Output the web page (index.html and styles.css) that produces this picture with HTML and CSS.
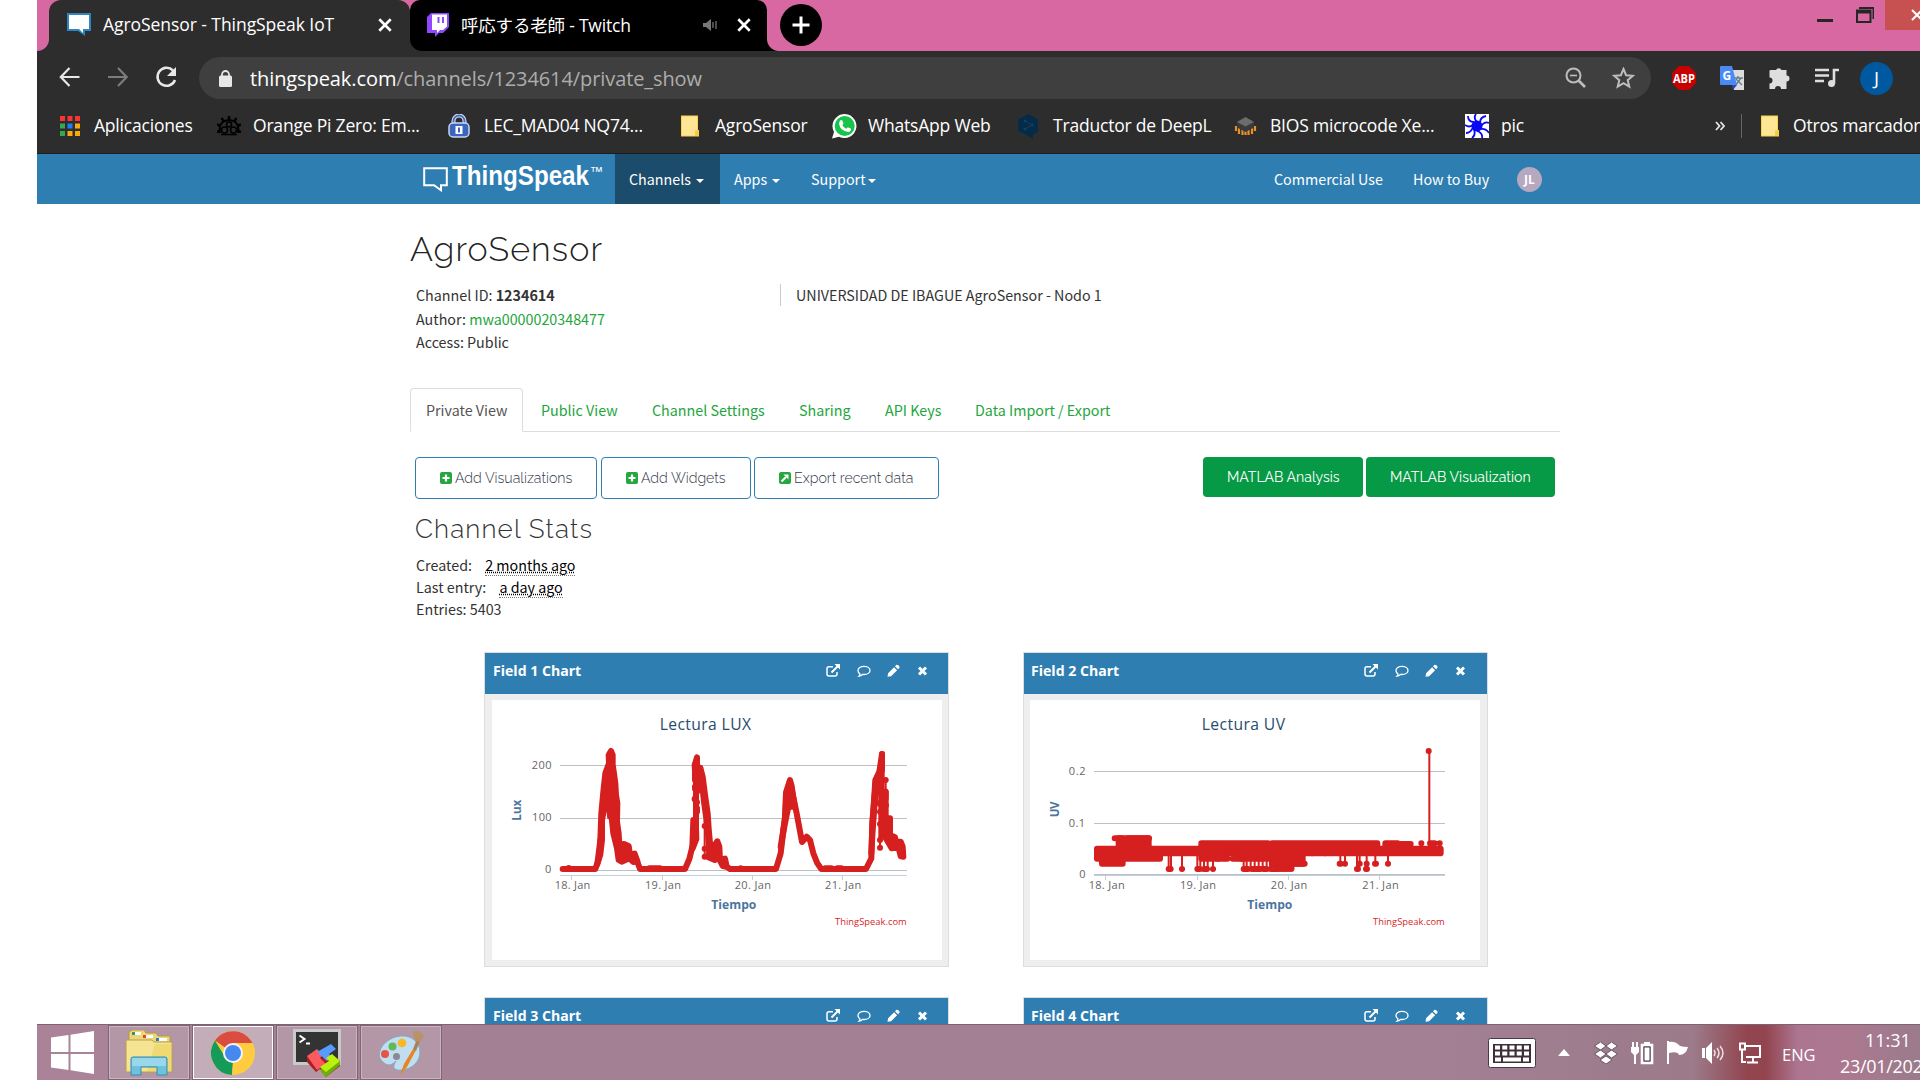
FILE: index.html
```html
<!DOCTYPE html>
<html lang="es">
<head>
<meta charset="utf-8">
<title>AgroSensor - ThingSpeak IoT</title>
<link rel="stylesheet" href="styles.css">
</head>
<body>
<svg class="defs" width="0" height="0" aria-hidden="true">
  <symbol id="i-x" viewBox="0 0 14 14"><path d="M2 2l10 10M12 2L2 12" stroke="#fff" stroke-width="2.3" fill="none"/></symbol>
  <symbol id="i-folder" viewBox="0 0 18 21"><path d="M0 0h17v14.500h1V21H0z" fill="#f8d24a"/><path d="M1 1h15v14h-2v5H1z" fill="#ffe694"/><path d="M14.500 20v-5H17v5z" fill="#f3c945"/></symbol>
  <symbol id="i-card-actions" viewBox="0 0 102 14">
    <g fill="none" stroke="#fff" stroke-width="1.500">
      <path d="M7 2.800H3Q1 2.800 1 4.800V10q0 2 2 2h6q2 0 2-2V8"/><path d="M5.500 8.500L12 2" stroke-width="2"/>
      <path d="M38 2.300c3.400 0 6 1.800 6 4.100s-2.600 4.100-6 4.100q-.8 0-1.500-.1Q35 12 33 12.200q1-1 .9-2.500Q32 8.500 32 6.400c0-2.300 2.600-4.100 6-4.100z" stroke-width="1.300"/>
      <path d="M93 3.500l7 7M100 3.500l-7 7" stroke-width="3"/>
    </g>
    <path d="M8.500 0H14v5.500z M61.500 12.800l.6-3.600 6-6 3 3-6 6zM69 2.300l1.500-1.500 1.500.2 1.500 1.500v1.300L72 5.300z" fill="#fff"/>
  </symbol>
</svg>
<div class="desktop">
  <header class="titlebar">
    <div class="tab tab-active">
      <svg class="tab-icon" width="24" height="24" viewBox="0 0 24 24"><path d="M0 0h24v18h-6v5l-7-5H0z" fill="#2e86c1"/><path d="M2 2h20v14h-6v4l-4-4H2z" fill="#fff"/></svg>
      <span class="tab-title t1">AgroSensor - ThingSpeak IoT</span>
      <svg class="tab-close" width="16" height="16"><use href="#i-x"/></svg>
    </div>
    <div class="tab tab-twitch">
      <svg class="tab-icon" width="22" height="24" viewBox="0 0 22 24"><path d="M4 0h18v14l-6 6h-4l-4 4v-4H0V4z" fill="#9147ff"/><path d="M5 1.500h15v12l-4 3.500h-3l-3 3v-3H5z" fill="#fff"/><path d="M11.500 4v6M16 4v6" stroke="#9147ff" stroke-width="2"/></svg>
      <span class="tab-title t2">呼応する老師 - Twitch</span>
      <svg class="speaker" width="16" height="14" viewBox="0 0 16 14"><path d="M0 5h3l5-4v12L3 9H0z" fill="#777"/><path d="M10 4v6M13 3v8" stroke="#666" stroke-width="1.500"/></svg>
      <svg class="tab-close" width="16" height="16"><use href="#i-x"/></svg>
    </div>
    <div class="newtab"><svg width="42" height="42" viewBox="0 0 42 42"><circle cx="21" cy="21" r="21"/><path d="M21 12.500v17M12.500 21h17" stroke="#fff" stroke-width="3"/></svg></div>
    <div class="wincontrols">
      <svg width="60" height="30" viewBox="0 0 60 30"><path d="M0 19h16v3H0z" fill="#262626"/><path d="M42 7h15v12h-1.500V9H42z" fill="#262626"/><path d="M40 10.500h13.500v11.500H40z" fill="none" stroke="#262626" stroke-width="2"/><path d="M39 10h15v3.500H39z" fill="#262626"/></svg>
      <div class="winclose"><svg width="12" height="12" viewBox="0 0 12 12"><path d="M1 1l10 10M11 1L1 11" stroke="#fff" stroke-width="2"/></svg></div>
    </div>
  </header>

  <div class="toolbar">
    <svg class="nav" width="126" height="24" viewBox="0 0 126 24" fill="none" stroke-width="2.200"><path d="M20.500 12H2M10.500 3L1.800 12l8.700 9" stroke="#e8e8e8"/><path d="M49 12h18.500M59 3l8.700 9-8.700 9" stroke="#7c7c7c"/><path d="M114 5.500A9 9 0 1 0 116 15" stroke="#e8e8e8" stroke-width="2.500"/><path d="M117 2v9h-9z" fill="#e8e8e8"/></svg>
    <div class="omnibox">
      <svg width="13" height="17" viewBox="0 0 13 17"><rect y="5.500" width="13" height="11.500" rx="1.500" fill="#e8e8e8"/><path d="M3 7V4.500a3.500 3.500 0 0 1 7 0V7" fill="none" stroke="#e8e8e8" stroke-width="1.800"/></svg>
      <span class="url"><b>thingspeak.com</b>/channels/1234614/private_show</span>
      <svg class="omni-icons" width="70" height="22" viewBox="0 0 70 22" fill="none" stroke="#bdbdbd" stroke-width="2"><circle cx="8.500" cy="8.500" r="7"/><path d="M13.500 13.500l6.500 6.500" stroke-width="2.600"/><path d="M5 8.500h7" stroke-width="1.600"/><path d="M58.500 2l2.600 6.200 6.700.6-5.100 4.400 1.600 6.500-5.800-3.500-5.800 3.500 1.600-6.500-5.100-4.400 6.700-.6z"/></svg>
    </div>
    <div class="extensions">
      <svg width="24" height="24" viewBox="0 0 24 24"><path d="M7 0h10l7 7v10l-7 7H7l-7-7V7z" fill="#c70000"/><text x="1" y="16.500" textLength="22" lengthAdjust="spacingAndGlyphs" class="abp">ABP</text></svg>
      <svg width="24" height="24" viewBox="0 0 24 24"><path d="M10 4h14v20H14z" fill="#dcdcdc"/><path d="M14 12h9M18 10v2M15 20l6-8M16 13l6 6" stroke="#607d8b" stroke-width="1.300"/><path d="M12 19h5l-4 5z" fill="#3049b8"/><path d="M1 0h11l5 19H1q-1 0-1-1V1q0-1 1-1z" fill="#4a8af4"/><text x="2.500" y="14" class="gtr">G</text></svg>
      <svg width="23" height="22" viewBox="0 0 22 22"><path d="M2 3h5.500a3 3 0 0 1 5.500 0H18v5.500a3 3 0 0 1 0 6V22h-5.500a3 3 0 0 0-6 0H1v-5.500a3 3 0 0 0 0-6V4q0-1 1-1z" fill="#dedede"/></svg>
      <svg width="24" height="20" viewBox="0 0 24 20"><path d="M0 2h14M0 7.500h14M0 13h9" stroke="#dedede" stroke-width="2.400"/><path d="M19 16V2h5" stroke="#dedede" stroke-width="2.600" fill="none"/><circle cx="16.500" cy="15.500" r="3.500" fill="#dedede"/></svg>
      <div class="profile">J</div>
    </div>
  </div>

  <nav class="bookmarks">
    <div class="bm"><svg width="20" height="20" viewBox="0 0 20 20"><path d="M0 0h5v5H0zM7.500 0h5v5h-5zM15 0h5v5h-5z" fill="#f33"/><path d="M0 7.500h5v5H0zM0 15h5v5H0z" fill="#34a853"/><path d="M7.500 7.500h5v5h-5z" fill="#1a80ff"/><path d="M15 7.500h5v5h-5zM7.500 15h5v5h-5zM15 15h5v5h-5z" fill="#fba90a"/></svg><span class="b1">Aplicaciones</span></div>
    <div class="bm"><svg width="24" height="20" viewBox="0 0 24 20" fill="none" stroke="#000"><path d="M3 17Q1 5 12 4q11 1 9 13" stroke-width="2"/><path d="M12 4V0M7 5.500L4.500 2M17 5.500L19.500 2M3.500 10L0 8.500M20.500 10L24 8.500M2.500 15L0 16M21.500 15l2.500 1" stroke-width="2.500"/><circle cx="7.500" cy="14" r="3" stroke-width="1.600"/><circle cx="16.500" cy="14" r="3" stroke-width="1.600"/><circle cx="12" cy="8.500" r="2.500" stroke-width="1.600"/><path d="M4 18.500h16" stroke-width="1.600"/></svg><span class="b2">Orange Pi Zero: Em...</span></div>
    <div class="bm"><svg width="22" height="24" viewBox="0 0 22 24"><path d="M5.500 11V7a5.500 5.500 0 0 1 11 0v4" fill="none" stroke="#d3def5" stroke-width="4"/><path d="M5.500 11V7a5.500 5.500 0 0 1 11 0v4" fill="none" stroke="#476cb8" stroke-width="1.800"/><rect x="1" y="9" width="20" height="14" rx="4" fill="#3c66bd" stroke="#c6d5f2" stroke-width="1.500"/><path d="M7.500 12h7v8h-7z" fill="#fff"/><path d="M11 13.500v5" stroke="#3c66bd" stroke-width="2"/></svg><span class="b3">LEC_MAD04 NQ74...</span></div>
    <div class="bm"><svg width="18" height="22"><use href="#i-folder"/></svg><span class="b4">AgroSensor</span></div>
    <div class="bm"><svg width="25" height="25" viewBox="0 0 25 25"><path d="M0 24.500l2-6.500A12 12 0 1 1 7 22.800z" fill="#fff"/><circle cx="12.700" cy="12" r="10" fill="#17c34b"/><path d="M8 6.500l2-.5 1.500 3.500-1.200 1.500q1.300 2.700 4 3.800l1.500-1.600 3.300 1.600q0 3-3 3.200Q8 17 7 9.500z" fill="#fff"/></svg><span class="b5">WhatsApp Web</span></div>
    <div class="bm"><svg width="21" height="25" viewBox="0 0 21 25"><path d="M10.500 0L20 5.500v12L15 20.500V25l-6-4-9-4V5.500z" fill="#042b48"/><path d="M7 7l7 4-7 4" stroke="#143f5e" fill="none"/><circle cx="7" cy="7" r="1.500" fill="#143f5e"/><circle cx="14" cy="11" r="1.500" fill="#143f5e"/><circle cx="7" cy="15" r="1.500" fill="#143f5e"/></svg><span class="b6">Traductor de DeepL</span></div>
    <div class="bm"><svg width="23" height="20" viewBox="0 0 23 20"><path d="M2 10v5M5 12v6M8.500 14v5M11.500 15v4M14.500 14v5M18 12v6M21 10v5" stroke="#e8902c" stroke-width="2.200"/><path d="M11.500 1L20 6v5.500L11.500 16 3 11.500V6z" fill="#3a3a3a"/><path d="M11.500 1L20 6l-8.500 4.500L3 6z" fill="#6c6c6c"/></svg><span class="b7">BIOS microcode Xe...</span></div>
    <div class="bm"><svg width="24" height="24" viewBox="0 0 24 24"><path d="M0 0h24v24H0z" fill="#fff"/><circle cx="12" cy="12" r="5.500" fill="#0808f5"/><path d="M12 8q-4-4-1-8M15 9q0-6 6-7M16 12q4-5 8-3M15 15q6-1 9 4M12 17q6 2 5 7M9 16q2 5-2 8M8 13q-2 6-7 6M8 11q-4 3-8 0M9 8Q3 8 3 2" fill="none" stroke="#0808f5" stroke-width="1.800"/></svg><span class="b8">pic</span></div>
    <div class="bm-more"><svg width="10" height="10" viewBox="0 0 10 10"><path d="M1 1l3.500 4L1 9M5.500 1L9 5 5.500 9" fill="none" stroke="#e5e5e5" stroke-width="1.800"/></svg></div>
    <div class="bm bm-last"><svg width="18" height="22"><use href="#i-folder"/></svg><span class="b9">Otros marcadores</span></div>
  </nav>

  <main class="page">
    <div class="site-nav">
      <div class="brand"><svg width="25" height="25" viewBox="0 0 25 25"><path d="M1.200 1.200h22.600v17H18v5l-7-5H1.200z" fill="none" stroke="#fff" stroke-width="2"/></svg><svg class="brand-name" width="154" height="32" viewBox="0 0 154 32"><text x="0" y="23" textLength="137" lengthAdjust="spacingAndGlyphs" class="word">ThingSpeak</text><text x="138" y="14" textLength="13" lengthAdjust="spacingAndGlyphs" class="tm">™</text></svg></div>
      <div class="menu on"><span>Channels</span><i class="caret"></i></div>
      <div class="menu apps"><span>Apps</span><i class="caret"></i></div>
      <div class="menu support"><span>Support</span><i class="caret"></i></div>
      <span class="right-link commercial">Commercial Use</span>
      <span class="right-link buy">How to Buy</span>
      <span class="avatar">JL</span>
    </div>
    <div class="container">
      <h1>AgroSensor</h1>
      <div class="meta">
        <div class="meta-left"><p>Channel ID: <b>1234614</b></p><p>Author: <a>mwa0000020348477</a></p><p>Access: Public</p></div>
        <div class="meta-right">UNIVERSIDAD DE IBAGUE AgroSensor - Nodo 1</div>
      </div>
      <div class="tabs">
        <span class="active">Private View</span><span>Public View</span><span>Channel Settings</span><span>Sharing</span><span>API Keys</span><span>Data Import / Export</span>
      </div>
      <div class="actions">
        <div class="btn v"><svg width="12" height="12" viewBox="0 0 12 12"><rect width="12" height="12" rx="2" fill="#26a63f"/><path d="M6 2.500v7M2.500 6h7" stroke="#fff" stroke-width="2.200"/></svg><span>Add Visualizations</span></div>
        <div class="btn w"><svg width="12" height="12" viewBox="0 0 12 12"><rect width="12" height="12" rx="2" fill="#26a63f"/><path d="M6 2.500v7M2.500 6h7" stroke="#fff" stroke-width="2.200"/></svg><span>Add Widgets</span></div>
        <div class="btn e"><svg width="12" height="12" viewBox="0 0 12 12"><rect width="12" height="12" rx="2" fill="#26a63f"/><path d="M2.500 9.500L7 5" stroke="#fff" stroke-width="2.200"/><path d="M4.500 2.500h5v5z" fill="#fff"/></svg><span>Export recent data</span></div>
        <div class="green g1"><span>MATLAB Analysis</span></div>
        <div class="green g2"><span>MATLAB Visualization</span></div>
      </div>
      <h2>Channel Stats</h2>
      <div class="stats"><p>Created: <abbr class="created">2 months ago</abbr></p><p>Last entry: <abbr class="last">a day ago</abbr></p><p>Entries: 5403</p></div>
      <div class="cards">
        <section class="card">
          <div class="card-head"><span>Field 1 Chart</span><svg width="102" height="14"><use href="#i-card-actions"/></svg></div>
          <svg class="chart" viewBox="36 180 1350 780">
            <path class="grid" d="M240 376.500H1281M240 535.500H1281M240 691.500H1281"/>
            <path class="axis" d="M240 706.500H1281M274.500 706v14M547.500 706v14M817.500 706v14M1087.500 706v14"/>
            <text class="title" x="539" y="270" textLength="274">Lectura LUX</text>
            <g class="labels"><text x="155" y="387" textLength="60">200</text><text x="156" y="543" textLength="59">100</text><text x="195" y="699">0</text><text x="224" y="747" textLength="107">18. Jan</text><text x="495" y="747" textLength="108">19. Jan</text><text x="764" y="747" textLength="109">20. Jan</text><text x="1035" y="747" textLength="109">21. Jan</text></g>
            <text class="axis-title" x="694" y="808" textLength="135" lengthAdjust="spacingAndGlyphs">Tiempo</text>
            <text class="axis-title" transform="translate(124 542) rotate(-90)" textLength="63" lengthAdjust="spacingAndGlyphs">Lux</text>
            <text class="credit" x="1065" y="855" textLength="215">ThingSpeak.com</text>
            <g class="line">
              <path d="M248 687H346L354 664L360 635L361 600M470 660L480 687H615L628 657L637 620M740 680L750 687H888L902 640L908 590L915 530L918 460L930 425L938 462L950 520L966 606L980 590L990 600L1000 640L1012 670L1024 687H1158L1174 655L1177 545L1188 420L1198 396L1206 342M266 684h.1M508 685H540M782 685h.1M1036 685H1054M1072 685h12"/>
              <path class="solid" d="M352 672L361 600L364 520L370 455L376 400L387 370L386 345L393 333L398 345V374L402 400L406 430L408 465L412 490L411 545L416 580L418 615L432 612L446 618L450 645L464 641L472 664L460 666L448 655L425 665L416 660L411 625L400 580L395 532L390 530L388 480L374 500L366 540L366 600L361 643Z"/>
              <path class="solid" d="M637 620L640 540L648 562L649 597L638 625ZM644 375L651 352L651 450L646 410ZM661 383L668 410L675 465L683 520L686 565L690 610L688 630L682 558L672 485ZM690 620L696 627L712 604L718 620L720 660L735 656L740 680L728 678L715 652L704 660L685 652Z"/>
              <path class="solid" d="M902 620L916 530L919 455L930 420L935 438L938 460L944 500L935 500L928 485L916 545ZM1174 640L1178 545L1186 420L1198 396L1195 410L1184 490L1178 570ZM1208 545L1212 470L1217 455L1217 535L1230 535L1230 585L1245 592L1248 605L1262 605L1268 620L1270 650L1262 649L1255 620L1235 625L1222 602L1208 580Z"/>
              <path d="M645 375V420M651 360V455M1206 342V390"/>
              <path class="core" d="M645 420V560M651 455V597M1201 400V600M1208 390V560"/>
              <path class="stems" d="M365 500V600M674 540V650M1200 590V625M1217 420V460"/>
              <path d="M645 440v6M651 487h.1M644 476v2M651 505v10M674 558h.1M674 626h.1M674 650h.1M366 564h.1M1199 489v2M1200 515h.1M1200 552h.1M1200 600h.1M1200 623h.1M1206 365v24M1217 420h.1M1217 455v20M1218 496h.1"/>
            </g>
          </svg>
        </section>
        <section class="card card2">
          <div class="card-head"><span>Field 2 Chart</span><svg width="102" height="14"><use href="#i-card-actions"/></svg></div>
          <svg class="chart" viewBox="42 180 1350 780">
            <path class="grid" d="M234 394.500H1287M234 550.500H1287M234 703.500H1287"/>
            <path class="axis" d="M234 706.500H1287M268 707v12M544 707v12M817 707v12M1090 707v12"/>
            <text class="title" x="557" y="270" textLength="250">Lectura UV</text>
            <g class="labels"><text x="158" y="404" textLength="51">0.2</text><text x="158" y="560" textLength="49">0.1</text><text x="190" y="714">0</text><text x="218" y="747" textLength="108">18. Jan</text><text x="492" y="747" textLength="108">19. Jan</text><text x="764" y="747" textLength="110">20. Jan</text><text x="1039" y="747" textLength="109">21. Jan</text></g>
            <text class="axis-title" x="694" y="808" textLength="135" lengthAdjust="spacingAndGlyphs">Tiempo</text>
            <text class="axis-title" transform="translate(129 532) rotate(-90)" textLength="48">UV</text>
            <text class="credit" x="1071" y="855" textLength="215">ThingSpeak.com</text>
            <g class="line">
              <path class="solid" d="M243 626H1274V640H243ZM243 626H432V656H243ZM258 656H320V671H258ZM336 595H398V640H336ZM308 595H318V640H308ZM556 610H756V626H556ZM556 626H606V656H556ZM676 610H730V656H676ZM768 610H1084V626H768ZM770 630H826V686H770ZM820 630H860V671H820ZM1108 610H1145V626H1108ZM962 626H1084V640H962Z"/>
              <path d="M296 595H399M606 656H634M650 656H680M730 656H760M835 671H866M1146 612H1184M826 686H770"/>
              <path class="stems" d="M458 640V686M465 640V686M498 640V686M544 640V686M553 640V686M564 640V686M575 640V686M591 640V686M623 615V656M638 615V656M650 615V656M664 615V656M683 656V686M692 656V686M704 656V686M716 656V686M728 656V686M740 656V686M752 656V686M762 640V686M888 626V640M927 626V640M973 640V671M987 640V671M1023 640V686M1031 640V671M1052 640V686M1078 640V671M1116 640V671M1216 610V626M1240 333V626"/>
              <path d="M458 687h6M498 687h.1M544 687h7M564 687h9M591 687h.1M683 687h13M708 687h25M742 687h10M765 687h15M888 640h.1M927 640h.1M971 671h3M987 671h.1M1023 687h3M1031 671h.1M1050 687h3M1052 671h.1M1077 671h3M1116 671h.1M1216 610h.1M1242 610h14M1271 610h.1M1238 333h.1"/>
            </g>
          </svg>
        </section>
        <section class="card"><div class="card-head"><span>Field 3 Chart</span><svg width="102" height="14"><use href="#i-card-actions"/></svg></div></section>
        <section class="card card2"><div class="card-head"><span>Field 4 Chart</span><svg width="102" height="14"><use href="#i-card-actions"/></svg></div></section>
      </div>
    </div>
  </main>

  <footer class="taskbar">
    <div class="start"><svg width="43" height="43" viewBox="0 0 43 43" fill="#fff"><path d="M0 6.500L17.500 4v17H0zM19.500 3.700L43 0v21H19.500zM0 23h17.500v16L0 36.500zM19.500 23H43v20l-23.500-3.700z"/></svg></div>
    <div class="task"><svg width="48" height="46" viewBox="0 0 48 46"><path d="M4 2l3-2h12l2 3h10l2 3h12v12H4z" fill="#ecd67c" stroke="#b99a3c"/><path d="M7 2h9v3H7zM18 5h10v3H18zM31 8h11v3H31z" fill="#fff"/><path d="M7 2h3v3H7z" fill="#29a04b"/><path d="M18 5h3v3h-3z" fill="#e8442c"/><path d="M31 8h3v3h-3z" fill="#2a7fc6"/><path d="M1 11q0-1 1-1h25l2 2h17q1 0 1 1v29H1z" fill="#f5e493" stroke="#bd9e43"/><path d="M30 14h16v27H22z" fill="#e9cb4b" opacity=".45"/><path d="M6 45V29q0-2 2-2h32q2 0 2 2v16H32v-8H16v8z" fill="#6ec1df" stroke="#348caf"/><path d="M7 28h34v8H7z" fill="#b5e7f3" opacity=".6"/></svg></div>
    <div class="task current"><svg width="44" height="44" viewBox="0 0 44 44"><circle cx="22" cy="22" r="22" fill="#ffcb3f"/><path d="M22 22L4 9.500A22 22 0 0 1 41.500 12H22z" fill="#da4b40"/><path d="M4 9.500L14 26l8 6-1 12A22 22 0 0 1 4 9.500z" fill="#159b58"/><path d="M21 44l10-17-9 4z" fill="#ffcb3f"/><circle cx="22" cy="22" r="10" fill="#f5f5f5"/><circle cx="22" cy="22" r="8" fill="#4688f1"/></svg></div>
    <div class="task"><svg width="48" height="48" viewBox="0 0 48 48"><path d="M0 0h48v36H0z" fill="#c9c9c9"/><path d="M3 3h42v30H3z" fill="#333"/><path d="M6.500 6.500l5 3.500-5 3.500M13 14.500h4" stroke="#fff" stroke-width="2" fill="none"/><path d="M14 27v6l9 10 4-3 6 8 14-11v-6z" fill="#a91f24"/><path d="M28 37v6l5 5 14-12v-5z" fill="#6eae0a"/><path d="M14 27l10-7 6 6-3 3 6 6-9 6z" fill="#fb5b5f"/><path d="M24 23l14-8 5 5-7 5 3 3-5 4z" fill="#569bff"/><path d="M27 38l9-6-3-3 6-4 8 7-14 11z" fill="#b9f20c"/></svg></div>
    <div class="task"><svg width="48" height="46" viewBox="0 0 48 46"><path d="M24 6C34 5 43 12 43 22c0 9-7 17-18 18-9 1-10-3-6-9-4 4-8 6-13 1C-4 24 8 7 24 6z" fill="#c0deef" stroke="#80aac4"/><circle cx="19.500" cy="26.500" r="3.500" fill="#8e8794"/><circle cx="8" cy="24" r="4" fill="#e65445"/><circle cx="15.500" cy="16.500" r="4" fill="#62b85a"/><circle cx="25" cy="13" r="4.300" fill="#f9b625"/><path d="M36 19l3 1-9 17-7 8 4-11z" fill="#e78525"/><path d="M36 19l4-10 3 2-4 10z" fill="#a7825c"/><path d="M36 2q5-3 11 4l-4 6-5-1z" fill="#b99266"/></svg></div>
    <div class="tray">
      <svg class="kbd" width="48" height="30" viewBox="0 0 48 30"><rect x=".5" y=".5" width="47" height="29" rx="2" fill="#fff" stroke="#4b3a45"/><path d="M5 6h38v19H5z" fill="#3f3038"/><path d="M7 9.500h34M7 15.500h34" stroke="#fff" stroke-width="4" stroke-dasharray="5 2.250"/><path d="M7 21.500h6M15 21.500h18M35 21.500h6" stroke="#fff" stroke-width="4"/></svg>
      <svg class="up" width="12" height="7" viewBox="0 0 12 7"><path d="M6 0l6 7H0z" fill="#fff"/></svg>
      <svg class="drop" width="24" height="22" viewBox="0 0 24 22" fill="#fff" stroke="#55424e" stroke-width=".8"><path d="M6.500 0l5.500 4-5.500 4L.5 4zM17.500 0L12 4l5.500 4 6-4zM.5 12l6-4 5.500 4-5.500 4zM23.500 12l-6-4-5.500 4 5.500 4zM12 14l6 4-6 4-6-4z"/></svg>
      <svg class="power" width="24" height="24" viewBox="0 0 24 24"><path d="M1 6h8v5l-3 3v9H4v-9l-3-3zM2 1h2v5H2zM6 1h2v5H6z" fill="#fff"/><path d="M12 4h10v18H12z" fill="none" stroke="#fff" stroke-width="2.600"/><path d="M14 6h6v14h-6z" fill="#fff" stroke="#4b3a45"/><path d="M14 1h6v2h-6z" fill="#fff"/></svg>
      <svg class="flag" width="23" height="24" viewBox="0 0 23 24"><path d="M2 0v23" stroke="#fff" stroke-width="2"/><path d="M3 1q5-1 9 2 1 3 10 3-2 8-9 8-1-4-10-2z" fill="#fff"/></svg>
      <svg class="sound" width="24" height="24" viewBox="0 0 24 24"><path d="M1 7h3v10H1zM5 7l6-6v22l-6-6z" fill="#fff"/><path d="M13 9q2 3 0 6M16 7q4 5 0 10M19 5q6 7 0 14" fill="none" stroke="#ecdfe5" stroke-width="1.500"/></svg>
      <svg class="net" width="24" height="22" viewBox="0 0 24 22" fill="none" stroke="#fff" stroke-width="2"><path d="M8 4h14v11H8M15 15v5M9 20.500h11M4 8v12h4"/><path d="M2 1.500h5v6H2z"/></svg>
      <span class="lang">ENG</span>
      <div class="clock"><span class="time">11:31</span><span class="date">23/01/2021</span></div>
    </div>
  </footer>
</div>
</body>
</html>
```
FILE: styles.css
```css
* { box-sizing: border-box; }
body { margin: 0; background: #fff; overflow: hidden; font-family: "Open Sans", "Noto Sans", "Noto Sans CJK JP", sans-serif; }
p, h1, h2 { margin: 0; font-weight: 400; }
svg { display: block; flex: none; }
span { white-space: nowrap; }
.defs { position: absolute; }
.desktop { width: 1883px; height: 1080px; margin-left: 37px; display: flex; flex-direction: column; overflow: hidden; }

/* browser chrome */
.titlebar { height: 51px; flex: none; display: flex; padding-left: 12px; background: radial-gradient(circle at 0 0, #d768a2 11.5px, #2d2d2d 12.500px) 0 39px / 12px 12px no-repeat, radial-gradient(circle at 100% 0, #d768a2 11.500px, #000 12.500px) 730px 39px / 12px 12px no-repeat, #d768a2; }
.tab { height: 51px; display: flex; align-items: center; color: #fff; font-size: 17.5px; padding-bottom: 2px; }
.tab-active { width: 361px; background: #2d2d2d; border-radius: 12px 12px 0 0; padding-left: 18px; }
.tab-twitch { width: 357px; background: radial-gradient(circle at 100% 0, #000 11.500px, #2d2d2d 12.500px) 0 39px / 12px 12px no-repeat, #000; border-radius: 10px 10px 0 0; padding-left: 17px; }
.t1 { margin: -1px 0 0 12px; width: 274px; letter-spacing: -.06px; }
.t2 { margin: -1px 0 0 12px; width: 242px; letter-spacing: -.2px; }
.speaker { margin-right: 17px; }
.newtab { margin: 4px 0 0 13px; }
.wincontrols { margin-left: auto; display: flex; }
.wincontrols > svg { margin-right: 8px; }
.winclose { width: 35px; height: 30px; background: #c75050; padding: 9px 0 0 26px; overflow: hidden; }
.toolbar { height: 52px; flex: none; background: #2d2d2d; display: flex; padding-top: 6px; }
.nav { margin: 8px 14px 0 22px; }
.omnibox { width: 1452px; height: 42px; border-radius: 21px; background: #3f3f3f; display: flex; align-items: center; padding: 0 16px 0 20px; }
.url { margin-left: 18px; margin-top: 0; font-size: 20px; color: #adadad; letter-spacing: -.09px; }
.url b { font-weight: 400; color: #fff; }
.omni-icons { margin-left: auto; }
.extensions { display: flex; align-items: center; height: 42px; margin-left: 21px; gap: 24px; }
.abp { font: bold 12px "Open Sans", sans-serif; fill: #fff; }
.gtr { font: bold 12px "Open Sans", sans-serif; fill: #fff; }
.profile { width: 33px; height: 33px; border-radius: 50%; background: #0058a0; color: #fff; font-size: 19px; line-height: 32px; text-align: center; margin-left: -3px; }
.bookmarks { height: 51px; flex: none; background: #2d2d2d; border-bottom: 1px solid #1c1c1c; display: grid; grid-template-columns: 157px 231px 233px 151px 186px 216px 231px 250px 46px 1fr; align-items: center; padding: 0 0 4px 23px; color: #fff; font-size: 17.500px; }
.bm { display: flex; align-items: center; height: 46px; }
.bm span { margin-top: -2px; letter-spacing: -.2px; }
.b1 { margin-left: 14px; } .b2 { margin-left: 12px; } .b3 { margin-left: 14px; } .b4 { margin-left: 16px; }
.b5 { margin-left: 11px; } .b6 { margin-left: 14px; } .b7 { margin-left: 13px; } .b8 { margin-left: 12px; } .b9 { margin-left: 14px; }
.bm-more { border-right: 1px solid #666; height: 24px; width: 27px; padding-top: 7px; }

/* site navigation */
.page { flex: 1; min-height: 0; overflow: hidden; background: #fff; color: #333; font-family: "Noto Sans CJK JP", sans-serif; font-size: 14.300px; }
.site-nav { height: 50px; background: #2e7eb2; display: flex; align-items: center; padding-left: 386px; color: #fff; }
.brand { width: 192px; display: flex; align-items: center; }
.brand-name { margin: -2px 0 0 4px; overflow: visible; fill: #fff; }
.word { font: bold 27px "Liberation Sans", sans-serif; }
.tm { font: 13px "Liberation Sans", sans-serif; }
.menu { height: 50px; display: flex; align-items: center; }
.menu span, .right-link { margin-top: -2px; }
.menu.on { width: 105px; padding-left: 14px; background: #1c4c6b; }
.apps { width: 91px; padding-left: 14px; }
.support { width: 463px; }
.support .caret { margin-left: 2px; }
.caret { margin: 3px 0 0 5px; border: 4px solid transparent; border-top-color: #fff; border-bottom: 0; }
.commercial { width: 139px; }
.buy { width: 104px; }
.avatar { width: 25px; height: 25px; border-radius: 50%; background: #b5a8bf; font: bold 12px/25px "Open Sans", sans-serif; text-align: center; }

/* channel page */
.container { margin-left: 373px; width: 1150px; }
h1 { font: 300 34px/48px Raleway, Lato, sans-serif; letter-spacing: 1.100px; padding-top: 21px; color: #222; }
.meta { display: flex; margin-top: 11px; padding-left: 6px; line-height: 21.500px; }
.meta p { height: 23.500px; }
.meta-left { width: 364px; }
.meta-left a { color: #22a63c; }
.meta-right { height: 22px; padding-left: 15px; border-left: 1px solid #ccc; }
.tabs { height: 44px; margin-top: 33.500px; border-bottom: 1px solid #ddd; display: grid; grid-template-columns: 131px 111px 147px 86px 90px 1fr; line-height: 44px; color: #22a63c; }
.tabs .active { width: 113px; height: 44px; padding-left: 15px; border: 1px solid #ddd; border-bottom-color: #fff; border-radius: 4px 4px 0 0; line-height: 42px; color: #555; background: #fff; }
.actions { display: flex; height: 42px; margin-top: 25px; padding-left: 5px; font: 300 14.200px/40px Raleway, Lato, sans-serif; }
.btn { height: 42px; border: 1px solid #2e7eb2; border-radius: 4px; display: flex; align-items: center; padding-left: 24px; color: #303849; }
.btn span { margin-left: 3px; }
.v { width: 182px; margin-right: 4px; }
.w { width: 150px; margin-right: 3px; }
.e { width: 185px; margin-right: 264px; }
.green { height: 40px; border-radius: 4px; background: #079a46; color: #fff; padding-left: 24px; font-weight: 400; font-size: 14.050px; }
.g1 { width: 160px; margin-right: 3px; }
.g2 { width: 189px; }
h2 { font: 300 26px/36px Raleway, Lato, sans-serif; letter-spacing: 1.150px; margin: 12px 0 0 5px; }
.stats { margin-top: 6.500px; padding-left: 6px; line-height: 22px; }
.stats p { height: 22px; }
abbr { margin-left: 10px; color: #000; text-decoration: underline dotted; border-bottom: 1px dotted #777; display: inline-block; line-height: 19px; height: 21px; }
.cards { margin-top: 32.500px; padding-left: 74px; display: grid; grid-template-columns: 465px 465px; grid-auto-rows: 315px; gap: 30px 74px; }
.card { border: 1px solid #ddd; background: #eee; }
.card-head { height: 41px; background: #2e7eb2; color: #fff; display: flex; justify-content: space-between; padding: 8px 20px 0 8px; font: bold 14.100px/20px "Open Sans", sans-serif; }
.card2 .card-head { padding: 8px 21px 0 7px; }
.card-head svg { margin-top: 3px; }
.chart { width: 450px; height: 260px; margin: 6px 0 0 7px; background: #fff; }
.card2 .chart { margin-left: 6px; }
.chart text { font-family: "Open Sans", sans-serif; }
.chart .title { font-size: 47px; fill: #274b6d; }
.chart .labels text { font-size: 33px; fill: #666; }
.chart .axis-title { font-size: 35px; font-weight: 700; fill: #4d759e; }
.chart .credit { font-size: 28px; fill: #d61f1f; }
.grid { stroke: #c0c0c0; stroke-width: 3; shape-rendering: crispEdges; }
.axis { stroke: #c0d0e0; stroke-width: 3; fill: none; shape-rendering: crispEdges; }
.line path { fill: none; stroke: #d61f1f; stroke-width: 18; stroke-linecap: round; stroke-linejoin: round; }
.line .solid { fill: #d61f1f; }
.line .stems { stroke-width: 6; }
.line .core { stroke-width: 12; }

/* taskbar */
.taskbar { height: 56px; flex: none; display: flex; border-top: 1px solid #7e6472; background: linear-gradient(90deg, #aa8399 0, #a38094 25%, #a38094 75%, #9c7c8c 84%, #9c7a89 88%, #92454f 90.800%, #92454f 91.800%, #ac7590 93.500%, #ac7890 96%, #9a7b8c 100%); }
.start { width: 71px; flex: none; padding: 6px 0 0 14px; }
.task { width: 82px; flex: none; height: 55px; margin-right: 2px; border: 1px solid #806674; box-shadow: inset 0 0 0 1px #c9b3be; background: #b497a6; display: flex; align-items: center; justify-content: center; }
.task.current { background: #c3adb8; box-shadow: inset 0 0 0 1px #fff; }
.tray { flex: 1; min-width: 0; display: flex; align-items: center; color: #fff; padding-left: 1044px; }
.up { margin-left: 22px; }
.drop { margin-left: 24px; }
.power { margin-left: 12px; }
.flag { margin-left: 12px; }
.sound { margin-left: 12px; }
.net { margin-left: 13px; }
.lang { font-size: 16.500px; margin: 4px 0 0 20px; width: 58px; }
.clock { width: 80px; flex: none; font-size: 18px; line-height: 26px; display: flex; flex-direction: column; white-space: nowrap; }
.time { padding-left: 25px; }
.date { letter-spacing: -.3px; }
```
